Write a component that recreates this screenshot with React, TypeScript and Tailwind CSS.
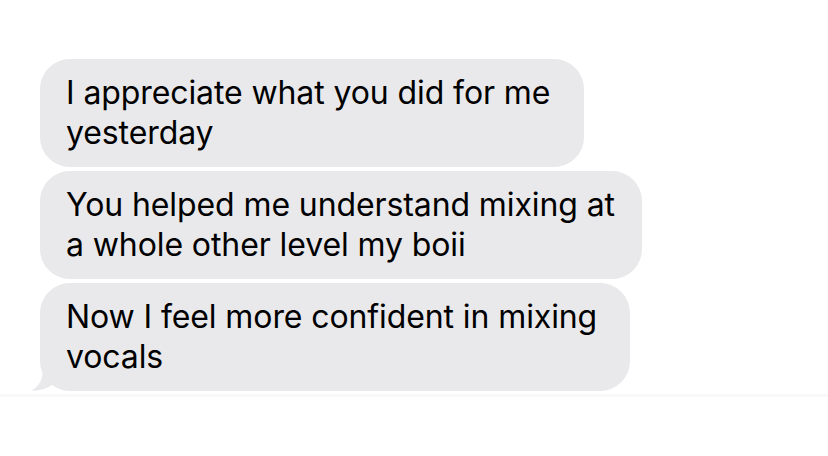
import React from "react";

const bubbles = [
  { lines: ["I appreciate what you did for me", "yesterday"], width: "w-[544px]" },
  { lines: ["You helped me understand mixing at", "a whole other level my boii"], width: "w-[602px]" },
  { lines: ["Now I feel more confident in mixing", "vocals"], width: "w-[590px]" },
];

const Tail = () => (
  <svg
    className="absolute -left-[9px] bottom-0"
    width="30"
    height="22"
    viewBox="0 0 30 22"
  >
    <path d="M12 0 C12 10 8 18 0 21.5 C8 22 16 20 22 15 L30 0 Z" fill="#e9e9eb" />
  </svg>
);

export default function App() {
  return (
    <div className="w-[828px] h-[456px] bg-white font-['Inter',sans-serif] text-black">
      <div className="flex flex-col gap-[4px] pt-[59px] pl-[40px]">
        {bubbles.map((b, i) => (
          <div
            key={i}
            className={`relative ${b.width} rounded-[30px] bg-[#e9e9eb] px-[26px] py-[14px] text-[32px] leading-[40px] tracking-[-0.1px] whitespace-nowrap`}
          >
            {b.lines.map((l, j) => (
              <div key={j}>{l}</div>
            ))}
            {i === bubbles.length - 1 && <Tail />}
          </div>
        ))}
      </div>
      <div className="mt-[3px] h-[3px] bg-[#f8f8f8]" />
    </div>
  );
}
